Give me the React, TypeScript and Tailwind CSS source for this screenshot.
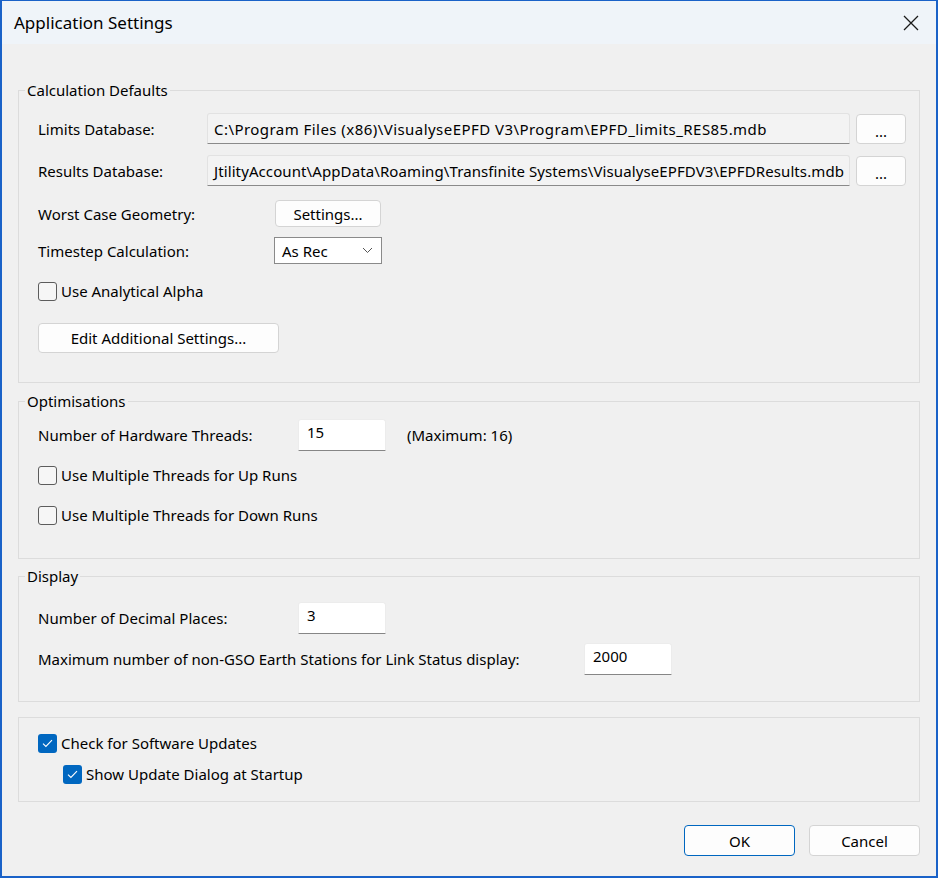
import { ReactNode } from "react";

const Button = ({
  children,
  className = "",
  primary = false,
}: {
  children: ReactNode;
  className?: string;
  primary?: boolean;
}) => (
  <button
    className={`flex items-center justify-center rounded-[4px] bg-[#fdfdfd] text-[15px] text-black ${
      primary ? "border border-[#0067c0]" : "border border-[#d4d4d4]"
    } ${className}`}
  >
    {children}
  </button>
);

const CheckBox = ({ checked = false, label }: { checked?: boolean; label: string }) => (
  <label className="flex h-[20px] items-center gap-[4px]">
    {checked ? (
      <span className="flex h-[19px] w-[19px] items-center justify-center rounded-[3px] bg-[#0067c0]">
        <svg width="11" height="9" viewBox="0 0 11 9" fill="none">
          <path d="M1 4.6 L3.9 7.4 L10 1.2" stroke="white" strokeWidth="1.1" />
        </svg>
      </span>
    ) : (
      <span className="h-[19px] w-[19px] rounded-[3px] border border-[#5c5c5c] bg-[#f6f6f6]" />
    )}
    <span>{label}</span>
  </label>
);

const ReadOnlyBox = ({ value, className = "" }: { value: string; className?: string }) => (
  <div
    className={`flex h-[31px] flex-1 items-center overflow-hidden whitespace-nowrap rounded-t-[3px] border border-[#e2e2e2] border-b-[#8a8a8a] bg-[#f3f3f3] pl-[6px] ${className}`}
  >
    {value}
  </div>
);

const NumberBox = ({ value }: { value: string }) => (
  <div className="h-[32px] w-[88px] rounded-t-[3px] border border-[#ececec] border-b-[#868686] bg-white pl-[8px] pt-[2px]">
    {value}
  </div>
);

const Group = ({
  title,
  children,
  className = "",
}: {
  title?: string;
  children: ReactNode;
  className?: string;
}) => (
  <fieldset className={`border border-[#dcdcdc] pl-[19px] pr-[13px] ${className}`}>
    {title && <legend className="-ml-[13px] px-[2px] leading-[20px]">{title}</legend>}
    {children}
  </fieldset>
);

export default function App() {
  return (
    <div className="flex h-[878px] w-[938px] flex-col border-x-2 border-b-2 border-t border-[#1a62c8] bg-[#f0f0f0] font-['Noto_Sans',sans-serif] text-[15px] leading-[20px] text-black">
      {/* title bar */}
      <div className="flex h-[43px] items-center justify-between bg-[#eff4f9] pl-[12px] pr-[17px]">
        <span className="text-[17px]">Application Settings</span>
        <svg width="16" height="16" viewBox="0 0 16 16" fill="none">
          <path d="M1 1 L15 15 M15 1 L1 15" stroke="#1a1a1a" strokeWidth="1.3" />
        </svg>
      </div>

      <div className="flex flex-1 flex-col px-4 pt-[36px]">
        {/* calculation defaults */}
        <Group title="Calculation Defaults" className="pb-[29px]">
          <div className="mt-[13px] flex items-center">
            <span className="w-[169px]">Limits Database:</span>
            <ReadOnlyBox
              className="tracking-[0.45px]"
              value="C:\Program Files (x86)\VisualyseEPFD V3\Program\EPFD_limits_RES85.mdb"
            />
            <Button className="ml-[6px] h-[30px] w-[50px] pt-[4px]">...</Button>
          </div>
          <div className="mt-[11px] flex items-center">
            <span className="w-[169px]">Results Database:</span>
            <ReadOnlyBox
              className="tracking-[0.1px]"
              value="JtilityAccount\AppData\Roaming\Transfinite Systems\VisualyseEPFDV3\EPFDResults.mdb"
            />
            <Button className="ml-[6px] h-[30px] w-[50px] pt-[4px]">...</Button>
          </div>
          <div className="mt-[14px] flex items-center">
            <span className="w-[237px]">Worst Case Geometry:</span>
            <Button className="h-[27px] w-[106px]">Settings...</Button>
          </div>
          <div className="mt-[10px] flex items-center">
            <span className="w-[236px]">Timestep Calculation:</span>
            <div className="flex h-[27px] w-[108px] items-center justify-between border border-[#8a8a8a] bg-white pl-[7px] pr-[8px]">
              <span>As Rec</span>
              <svg width="11" height="7" viewBox="0 0 11 7" fill="none">
                <path d="M1 1 L5.5 5.5 L10 1" stroke="#555" strokeWidth="1" />
              </svg>
            </div>
          </div>
          <div className="mt-[17px]">
            <CheckBox label="Use Analytical Alpha" />
          </div>
          <Button className="mt-[22px] h-[30px] w-[241px]">Edit Additional Settings...</Button>
        </Group>

        {/* optimisations */}
        <Group title="Optimisations" className="mt-[8px] pb-[33px]">
          <div className="mt-[8px] flex items-center">
            <span className="w-[260px]">Number of Hardware Threads:</span>
            <NumberBox value="15" />
            <span className="ml-[21px]">(Maximum: 16)</span>
          </div>
          <div className="mt-[14px]">
            <CheckBox label="Use Multiple Threads for Up Runs" />
          </div>
          <div className="mt-[20px]">
            <CheckBox label="Use Multiple Threads for Down Runs" />
          </div>
        </Group>

        {/* display */}
        <Group title="Display" className="mt-[7px] pb-[26px]">
          <div className="mt-[16px] flex items-center">
            <span className="w-[260px]">Number of Decimal Places:</span>
            <NumberBox value="3" />
          </div>
          <div className="mt-[9px] flex items-center">
            <span className="w-[546px]">
              Maximum number of non-GSO Earth Stations for Link Status display:
            </span>
            <NumberBox value="2000" />
          </div>
        </Group>

        {/* updates */}
        <Group className="mt-[15px] pb-[17px] pt-[15px]">
          <CheckBox checked label="Check for Software Updates" />
          <div className="mt-[11px] pl-[25px]">
            <CheckBox checked label="Show Update Dialog at Startup" />
          </div>
        </Group>

        <div className="mt-[23px] flex justify-end gap-[14px]">
          <Button primary className="h-[31px] w-[111px]">
            OK
          </Button>
          <Button className="h-[31px] w-[111px]">Cancel</Button>
        </div>
      </div>
    </div>
  );
}
